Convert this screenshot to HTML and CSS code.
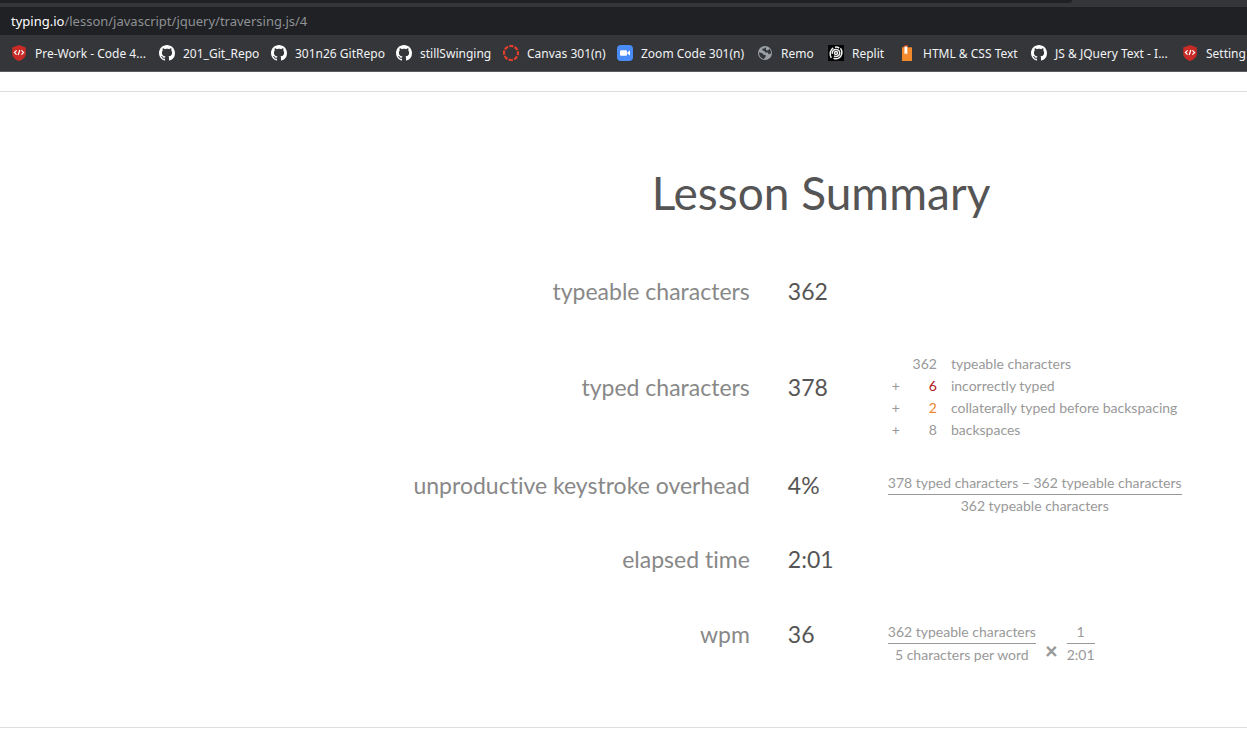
FILE: index.html
```html
<!DOCTYPE html>
<html lang="en">
<head>
<meta charset="utf-8">
<title>Lesson Summary</title>
<link rel="stylesheet" href="styles.css">
</head>
<body>
<svg class="sprite" aria-hidden="true">
  <symbol id="github" viewBox="0 0 16 16"><path fill="#fff" d="M8 0C3.58 0 0 3.58 0 8c0 3.54 2.29 6.53 5.47 7.59.4.07.55-.17.55-.38 0-.19-.01-.82-.01-1.49-2.01.37-2.53-.49-2.69-.94-.09-.23-.48-.94-.82-1.13-.28-.15-.68-.52-.01-.53.63-.01 1.08.58 1.23.82.72 1.21 1.87.87 2.33.66.07-.52.28-.87.51-1.07-1.78-.2-3.64-.89-3.64-3.95 0-.87.31-1.59.82-2.15-.08-.2-.36-1.02.08-2.12 0 0 .67-.21 2.2.82.64-.18 1.32-.27 2-.27s1.36.09 2 .27c1.53-1.04 2.2-.82 2.2-.82.44 1.1.16 1.92.08 2.12.51.56.82 1.27.82 2.15 0 3.07-1.87 3.75-3.65 3.95.29.25.54.73.54 1.48 0 1.07-.01 1.93-.01 2.2 0 .21.15.46.55.38A8.01 8.01 0 0 0 16 8c0-4.42-3.58-8-8-8z"/></symbol>
  <symbol id="shield" viewBox="0 0 16 16"><path fill="#c92b27" d="M8 0 14.8 2.4V8.500C14.800 12 12 14.500 8 16 4 14.500 1.200 12 1.200 8.500V2.400z"/><path fill="none" stroke="#fff" stroke-width="1.200" d="M5.600 5.400 3.400 7.500l2.200 2.100M10.400 5.400l2.200 2.100-2.200 2.100M8.800 5 7.200 10"/></symbol>
</svg>
<header class="browser">
  <div class="tabstrip"></div>
  <div class="address"><span class="host">typing.io</span>/lesson/javascript/jquery/traversing.js/4</div>
  <nav class="bookmarks" aria-label="Bookmarks">
    <a href="#"><svg class="icon"><use href="#shield"/></svg>Pre-Work - Code 4...</a>
    <a href="#"><svg class="icon"><use href="#github"/></svg>201_Git_Repo</a>
    <a href="#"><svg class="icon"><use href="#github"/></svg>301n26 GitRepo</a>
    <a href="#"><svg class="icon"><use href="#github"/></svg>stillSwinging</a>
    <a href="#"><svg class="icon" viewBox="0 0 16 16"><circle cx="8" cy="8" r="7" fill="none" stroke="#e13f2b" stroke-width="2.200" stroke-dasharray="4.200 1.300" stroke-dashoffset="2"/></svg>Canvas 301(n)</a>
    <a href="#"><svg class="icon" viewBox="0 0 16 16"><rect width="16" height="16" rx="4" fill="#4a8cf7"/><rect x="3" y="5.200" width="7" height="5.600" rx="1.300" fill="#fff"/><path fill="#fff" d="M10.500 7.200 13 5.400v5.200l-2.500-1.800z"/></svg>Zoom Code 301(n)</a>
    <a href="#"><svg class="icon" viewBox="0 0 16 16"><circle cx="8" cy="8" r="7" fill="#9aa0a6"/><path fill="#35363a" d="M8.800 2.300 7 3.500 5.200 3.800 5.600 5.500 7.500 6 8.200 7.400 11 7.600 11.500 9.200 14 8.600C14 6 13.500 4.600 12.300 3.500L11.500 5.300 9.800 5.600 9 4.500zM2 7.600 5 8.100 6.600 9.800 8.700 10 8.500 12 6.900 14C4 13.500 2 11 2 7.600z"/></svg>Remo</a>
    <a href="#"><svg class="icon" viewBox="0 0 16 16"><rect width="16" height="16" fill="#050505"/><g fill="none" stroke="#eee" stroke-width="1.500"><circle cx="8" cy="8" r="1.500"/><path d="M4.300 8.800C3.900 6 5.800 4.300 8.200 4.400c2.500.1 4 2.400 3.400 4.600-.6 2.200-3.600 3.300-5.600 1.900"/><path d="M3.300 12.800C1.200 9.700 1.900 4.800 5.300 2.800M12.500 3.300C15 6.600 14 11.500 10.600 13.200c-1.600.8-3.600.8-5-.1M7 2.200c1.500-.3 3 0 4.200.9"/></g></svg>Replit</a>
    <a href="#"><svg class="icon" viewBox="0 0 16 16"><path fill="#b8431d" d="M3 3 6 0h3v2.500z"/><path fill="#f28a2b" d="M3 2.300h10V16H3z"/><path fill="#fff" d="M5.500 1.500h2.800v8L6.900 8.300 5.500 9.500z"/></svg>HTML &amp; CSS Text</a>
    <a href="#"><svg class="icon"><use href="#github"/></svg>JS &amp; JQuery Text - I...</a>
    <a href="#"><svg class="icon"><use href="#shield"/></svg>Setting</a>
  </nav>
</header>
<main class="lesson">
  <h1>Lesson Summary</h1>
  <dl class="summary">
    <div class="row"><dt>typeable characters</dt><dd class="value">362</dd></div>
    <div class="row"><dt>typed characters</dt><dd class="value">378</dd>
      <dd class="detail">
        <table class="sum">
          <tr><td></td><td class="count">362</td><td>typeable characters</td></tr>
          <tr><td>+</td><td class="count wrong">6</td><td>incorrectly typed</td></tr>
          <tr><td>+</td><td class="count collateral">2</td><td>collaterally typed before backspacing</td></tr>
          <tr><td>+</td><td class="count">8</td><td>backspaces</td></tr>
        </table>
      </dd></div>
    <div class="row"><dt>unproductive keystroke overhead</dt><dd class="value">4%</dd>
      <dd class="detail">
        <span class="fraction"><span class="top">378 typed characters − 362 typeable characters</span><span>362 typeable characters</span></span>
      </dd></div>
    <div class="row"><dt>elapsed time</dt><dd class="value">2:01</dd></div>
    <div class="row"><dt>wpm</dt><dd class="value">36</dd>
      <dd class="detail">
        <span class="fraction"><span class="top">362 typeable characters</span><span>5 characters per word</span></span>
        <span class="times">×</span>
        <span class="fraction"><span class="top">1</span><span>2:01</span></span>
      </dd></div>
  </dl>
</main>
</body>
</html>
```
FILE: styles.css
```css
* { box-sizing: border-box; }
body { margin: 0; background: #fff; font-family: Lato, "Noto Sans", sans-serif; font-variant-ligatures: none; overflow-x: hidden; }
.sprite { display: none; }

.browser { background: #35363a; border-bottom: 1px solid #5b5c60; font-family: "Noto Sans", "Open Sans", sans-serif; font-size: 12px; color: #f1f3f4; }
.tabstrip { height: 3px; width: 86%; background: #202124; border-bottom-right-radius: 3px; }
.address { margin-top: 4px; height: 28px; line-height: 28px; padding-left: 11px; background: #202124; color: #8e9195; font-size: 13px; }
.host { color: #fff; }
.bookmarks { height: 36px; padding-left: 11px; display: grid; grid-template-columns: 148px 112px 125px 107px 114px 140px 71px 71px 132px 151px 1fr; align-items: center; overflow: hidden; }
.bookmarks a { display: flex; align-items: center; gap: 8px; color: inherit; text-decoration: none; white-space: nowrap; }
.icon { width: 16px; height: 16px; flex: none; }

.lesson { margin-top: 19px; padding: 65px 0 61px 4px; border: solid #ddd; border-width: 1px 0; }
h1 { margin: 0; padding-left: 391px; text-align: center; font-size: 46px; font-weight: 400; line-height: 72px; color: #555; white-space: nowrap; }
.summary { margin: 31px 0 0; display: flex; flex-direction: column; gap: 11px; }
.row { display: grid; grid-template-columns: 60% 62px 1fr; column-gap: 38px; align-items: center; min-height: 62px; }
dt { text-align: right; font-size: 23px; color: #888; }
dd { margin: 0; }
.value { font-size: 23px; color: #555; }
.detail { padding-top: 20px; display: flex; align-items: center; font-size: 14px; line-height: 22px; color: #999; white-space: nowrap; }
.sum { border-collapse: collapse; }
.sum td { padding: 0 0 0 4px; }
.sum .count { width: 37px; padding: 0; text-align: right; }
.sum .count + td { padding-left: 14px; }
.sum .wrong { color: #b11623; }
.sum .collateral { color: #f0852d; }
.fraction { display: flex; flex-direction: column; text-align: center; }
.top { border-bottom: 1px solid #999; }
.times { padding: 14px 9px 0; font-size: 22px; font-weight: 900; }
```
